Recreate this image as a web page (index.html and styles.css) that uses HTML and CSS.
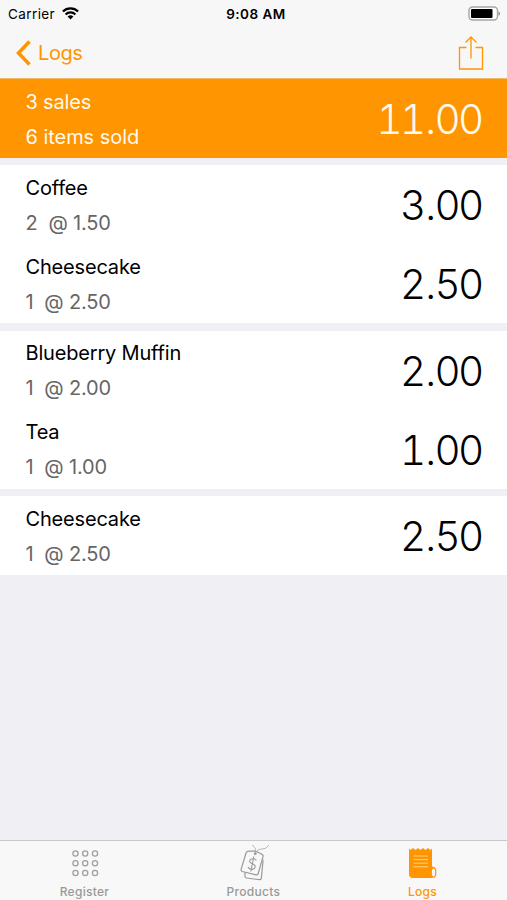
FILE: index.html
```html
<!DOCTYPE html>
<html lang="en"><head><meta charset="utf-8"><title>Logs</title><link rel="stylesheet" href="styles.css"></head>
<body>
<div class="statusbar"><div class="carrier"><span class="t-carrier">Carrier</span>
<svg width="17" height="13" viewBox="0 0 17 13"><g fill="none" stroke="#000" stroke-width="2.2"><path d="M.9 4.600a10.700 10.700 0 0 1 15.200 0M3.600 7.500a6.900 6.900 0 0 1 9.800 0"/></g><path d="M5.600 9.600a4.100 4.100 0 0 1 5.800 0L8.500 12.500z"/></svg></div>
<div class="time">9:08 AM</div>
<svg class="battery" width="33" height="15" viewBox="0 0 33 15"><rect x="1" y="1" width="28.500" height="13" rx="3.500" fill="#fff" stroke="#a5a5a5" stroke-width="1.400"/><rect x="3" y="3" width="21.500" height="9" rx="1"/><path d="M30.500 5.200q3 2.300 0 4.600z" fill="#888"/></svg></div>
<header class="nav"><a class="back"><svg width="17" height="28" viewBox="0 0 17 28"><path d="M14.500 2.500L3.500 14l11 11.500" fill="none" stroke="#ff9500" stroke-width="3.500"/></svg><span>Logs</span></a>
<svg class="share" width="26" height="36" viewBox="0 0 26 36"><path d="M8.500 12.500H1.500v21.500h23v-21.500H17.500M13 23.500V2M7.500 7.500L13 2l5.500 5.500" fill="none" stroke="#ff9500" stroke-width="1.300"/></svg></header>
<main>
<section class="group summary"><div class="row"><div class="info"><div class="name">3 sales</div><div class="detail">6 items sold</div></div><div class="amount">11<span class="dot">.</span>00</div></div></section>
<section class="group"><div class="row"><div class="info"><div class="name">Coffee</div><div class="detail">2&nbsp; @ 1.50</div></div><div class="amount">3<span class="dot">.</span>00</div></div>
<div class="row"><div class="info"><div class="name">Cheesecake</div><div class="detail">1&nbsp; @ 2.50</div></div><div class="amount">2<span class="dot">.</span>50</div></div></section>
<section class="group"><div class="row"><div class="info"><div class="name">Blueberry Muffin</div><div class="detail">1&nbsp; @ 2.00</div></div><div class="amount">2<span class="dot">.</span>00</div></div>
<div class="row"><div class="info"><div class="name">Tea</div><div class="detail">1&nbsp; @ 1.00</div></div><div class="amount">1<span class="dot">.</span>00</div></div></section>
<section class="group"><div class="row"><div class="info"><div class="name">Cheesecake</div><div class="detail">1&nbsp; @ 2.50</div></div><div class="amount">2<span class="dot">.</span>50</div></div></section>
</main>
<nav class="tabs">
<div class="tab"><svg width="34" height="38" viewBox="0 0 34 38"><g fill="none" stroke="#a0a0a0" stroke-width="1.300"><circle cx="7.500" cy="8.500" r="2.600"/><circle cx="17.200" cy="8.500" r="2.600"/><circle cx="27" cy="8.500" r="2.600"/><circle cx="7.500" cy="18.200" r="2.600"/><circle cx="17.200" cy="18.200" r="2.600"/><circle cx="27" cy="18.200" r="2.600"/><circle cx="7.500" cy="28" r="2.600"/><circle cx="17.200" cy="28" r="2.600"/><circle cx="27" cy="28" r="2.600"/></g></svg><span>Register</span></div>
<div class="tab"><svg width="34" height="38" viewBox="0 0 34 38"><g fill="none" stroke="#999" stroke-width="1.200" stroke-linejoin="round"><path d="M11.500 6.200L18.500 6l6.500 3.200q1.300.9 1 2.500L21.200 28.500q-.5 1.800-2.200 1.400L5.300 26.500q-1.600-.5-1.200-2.200L9 8q.6-1.600 2.500-1.800z"/><path d="M25.500 14.500q.7.500.5 1.800L24.300 33.300q-.2 1.500-2 1.400L9.500 33q-1.700-.2-1.600-2.200l.2-3.500"/><path d="M18.500 8Q19.500 3 15.500 0M18.500 8Q21 3.500 25 4t7-4" stroke="#b0b0b0" stroke-width=".9"/><circle cx="18.300" cy="8.700" r=".8"/><path d="M19.300 15.500q-.7-2-3.700-1.700c-3.500.4-4 3.600-.9 4.700s4.200 2.300 3 4.500-5.700 1.800-6.700-1M16.800 11.500l-3 15" stroke-width="1.100"/></g></svg><span>Products</span></div>
<div class="tab active"><svg width="34" height="38" viewBox="0 0 34 38"><path fill="#ff9500" d="M3 3.500l1.500 1.500L7 3l2.500 2L12 3l2.500 2L17 3l2.500 2L22 3l2.500 2L26 3.500v18c5-1 5.500 11.500-1 11.500H7q-4 0-4-4z"/><ellipse cx="27.500" cy="27.500" rx="2.300" ry="4.700" fill="#f8f8f8" stroke="#ff9500" stroke-width="1.200"/><path d="M7.500 11h14.500M7.500 14.600h14.500M7.500 18.200h14.500M7.500 21.800h14.500" stroke="#ffd28d" fill="none"/></svg><span>Logs</span></div>
</nav>
</body></html>
```
FILE: styles.css
```css
*{box-sizing:border-box}
body{margin:0;height:900px;display:flex;flex-direction:column;background:#efeff4;font-family:Inter,sans-serif;color:#000;overflow:hidden}
.statusbar{height:27px;background:#f7f7f8;display:grid;grid-template-columns:1fr auto 1fr;align-items:center;padding:0 6px 0 8px;font-size:13.5px}
.carrier{display:flex;align-items:center;gap:7px}
.t-carrier{letter-spacing:.4px}
.time{font-weight:600;letter-spacing:.5px;margin-left:3px}
.battery{justify-self:end}
.nav{height:51px;background:#f7f7f8;display:flex;justify-content:space-between;align-items:center;padding:0 23px 0 15px;color:#ff9500}
.back{display:flex;align-items:center;gap:6px;font-size:20px;letter-spacing:-.4px}
main{flex:1;display:flex;flex-direction:column;gap:7.4px;border-top:1px solid #f1b867}
.group{background:#fff}
.row{height:79px;display:flex;justify-content:space-between;align-items:center;padding:2px 25px 0 25.5px}
.name,.detail{font-size:20px;line-height:35px;letter-spacing:-.18px}
.detail{color:#666}
.amount{font-size:40.5px;line-height:48px;font-weight:275;font-feature-settings:"tnum";letter-spacing:-2.8px;margin-right:.6px;padding-top:1px}
.dot{margin:0 1.4px 0 1.8px}
.summary{background:#ff9500;color:#fffaf0}
.summary .detail{color:#fffaf0;letter-spacing:-.05px}
.tabs{height:60px;border-top:1px solid #c8c8cc;background:#f8f8f8;display:grid;grid-template-columns:repeat(3,1fr)}
.tab{display:flex;flex-direction:column;align-items:center;padding-top:4px;font-size:12px;line-height:17px;font-weight:500;letter-spacing:.3px;color:#999}
.active{color:#ff9500}
```
